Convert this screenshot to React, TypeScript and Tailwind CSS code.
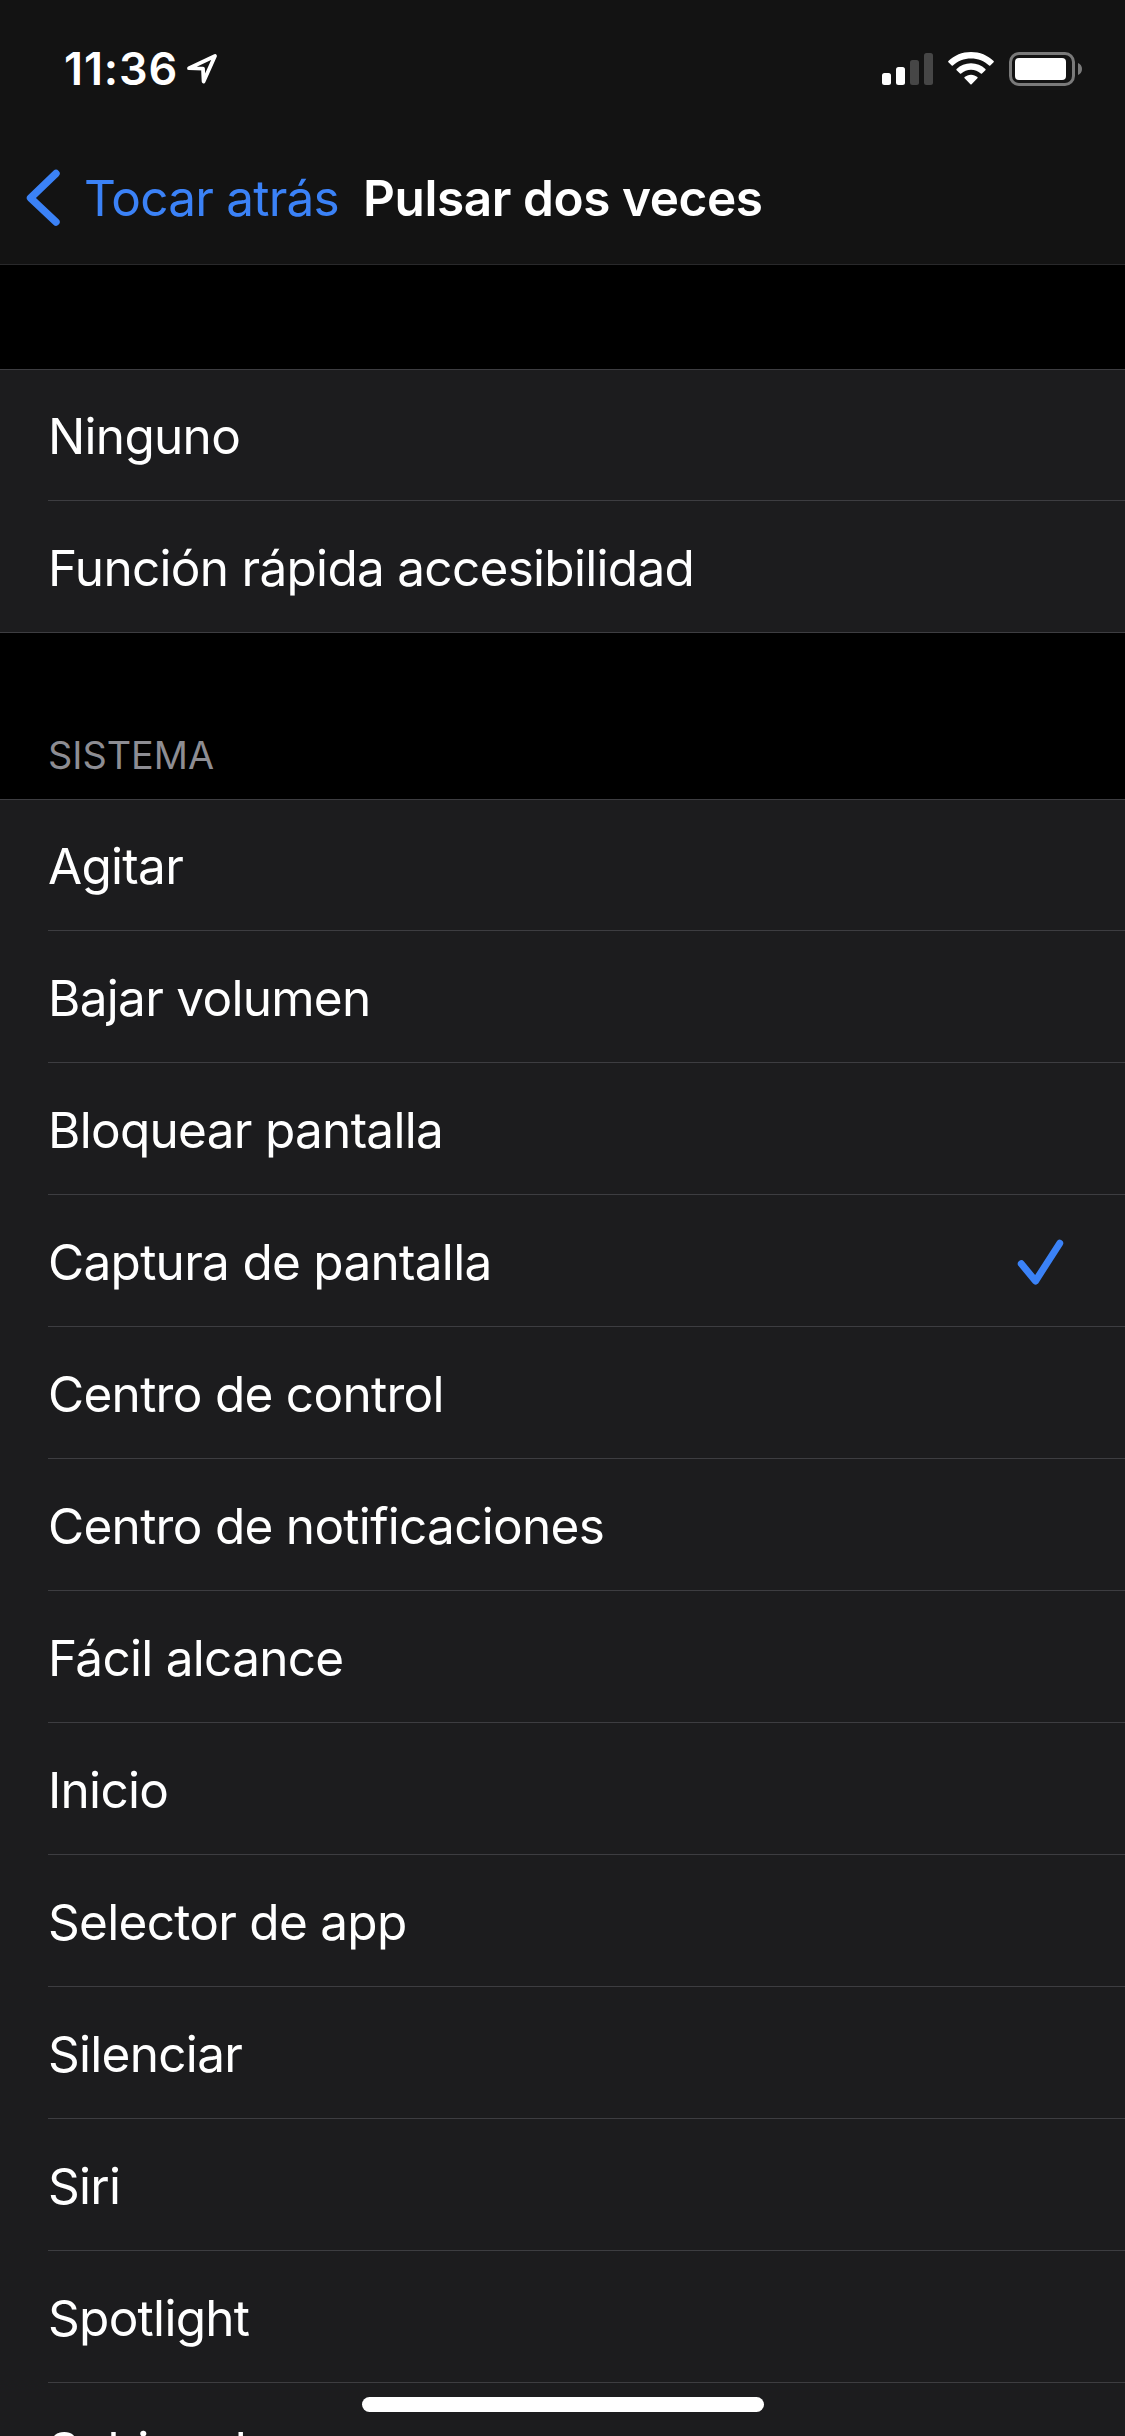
const topActions = ["Ninguno", "Función rápida accesibilidad"];

const systemActions = [
  "Agitar",
  "Bajar volumen",
  "Bloquear pantalla",
  "Captura de pantalla",
  "Centro de control",
  "Centro de notificaciones",
  "Fácil alcance",
  "Inicio",
  "Selector de app",
  "Silenciar",
  "Siri",
  "Spotlight",
  "Subir volumen",
];

function StatusBar() {
  return (
    <div className="flex h-[132px] items-start justify-between pl-[64px] pr-[43px] pt-[42px]">
      <div className="flex items-start">
        <span className="text-[45px] font-semibold leading-[54px] tracking-[0.85px]">11:36</span>
        <svg className="ml-[8px] mt-[11px]" width="32" height="32" viewBox="0 0 32 32" fill="none">
          <path
            d="M3 15.2 L29 3 L17.6 28.5 L17 15.6 Z"
            stroke="white"
            strokeWidth="3.8"
            strokeLinejoin="round"
          />
        </svg>
      </div>

      <div className="flex items-start pt-[10px]">
        <div className="mt-px flex h-8 items-end gap-[5px]">
          <div className="h-3 w-[9px] rounded-[2.5px] bg-white" />
          <div className="h-[18px] w-[9px] rounded-[2.5px] bg-white" />
          <div className="h-[25px] w-[9px] rounded-[2.5px] bg-[#464646]" />
          <div className="h-8 w-[9px] rounded-[2.5px] bg-[#464646]" />
        </div>
        <svg className="ml-[15px]" width="46" height="33" viewBox="0 0 46 33" fill="white">
          <path d="M23 0C31.800 0 39.800 3.300 45.600 9.100Q46.100 9.700 45.600 10.300L42.300 13.600Q41.700 14.100 41.100 13.600C36.300 9 30 6.600 23 6.600S9.700 9 4.900 13.600Q4.300 14.100 3.700 13.600L.4 10.300Q-.1 9.700 .4 9.100C6.200 3.300 14.200 0 23 0Z" />
          <path d="M23 11.200C28.600 11.200 33.600 13.300 37.400 17Q38 17.600 37.400 18.200L34 21.600Q33.400 22.100 32.800 21.600C30.200 19.200 26.700 17.700 23 17.700S15.800 19.200 13.200 21.600Q12.600 22.100 12 21.600L8.600 18.200Q8 17.600 8.600 17C12.400 13.300 17.400 11.200 23 11.200Z" />
          <path d="M23 22.700C25.500 22.700 27.700 23.600 29.400 25.100Q30 25.700 29.400 26.300L23.600 32.200Q23 32.800 22.400 32.200L16.600 26.300Q16 25.700 16.600 25.100C18.300 23.600 20.500 22.700 23 22.700Z" />
        </svg>
        <div className="ml-[15px] flex items-center">
          <div className="h-[34px] w-[66px] rounded-[10px] border-[3px] border-[#7a7a7a] p-[3px]">
            <div className="h-[22px] w-[51px] rounded-[4px] bg-white" />
          </div>
          <svg className="ml-[3px]" width="4" height="12" viewBox="0 0 4 12">
            <path d="M0 0C2.500 1 4 3.300 4 6S2.500 11 0 12Z" fill="#7a7a7a" />
          </svg>
        </div>
      </div>
    </div>
  );
}

function NavBar() {
  return (
    <div className="flex h-[132px] items-center pl-[25px]">
      <button className="flex items-center text-[#3b82f7]">
        <svg width="36" height="58" viewBox="0 0 36 58" fill="none">
          <path
            d="M31 4.500L5.500 29L31 53"
            stroke="currentColor"
            strokeWidth="7.400"
            strokeLinecap="round"
            strokeLinejoin="round"
          />
        </svg>
        <span className="ml-[23px] w-[279px] whitespace-nowrap text-left text-[49.500px] leading-[60px] tracking-[-0.78px]">
          Tocar atrás
        </span>
      </button>
      <h1 className="whitespace-nowrap text-[49.500px] font-semibold leading-[60px] tracking-[-0.42px]">
        Pulsar dos veces
      </h1>
    </div>
  );
}

function ActionList({ items, selected }: { items: string[]; selected?: string }) {
  return (
    <div className="border-t border-[#3d3d41] bg-[#1c1c1e]">
      <ul className="-mt-px">
        {items.map((item) => (
          <li key={item} className="group h-[132px] pl-12 last:border-b last:border-[#3d3d41]">
            <div className="flex h-[132px] items-center justify-between border-b border-[#3d3d41] pr-[60px] pt-[2px] group-last:border-b-0">
              <span className="whitespace-nowrap text-[49.500px] leading-[60px] tracking-[-0.71px]">{item}</span>
              {item === selected && (
                <svg width="48" height="48" viewBox="0 0 48 48" fill="none">
                  <path
                    d="M4.300 25.800L18.500 43L42.700 5.300"
                    stroke="#3b82f7"
                    strokeWidth="7"
                    strokeLinecap="round"
                    strokeLinejoin="round"
                  />
                </svg>
              )}
            </div>
          </li>
        ))}
      </ul>
    </div>
  );
}

export default function App() {
  return (
    <div className="relative h-[2436px] w-[1125px] overflow-hidden bg-black font-['Inter','Liberation_Sans',sans-serif] text-white">
      <header className="h-[265px] border-b border-[#29292b] bg-[#131313]">
        <StatusBar />
        <NavBar />
      </header>

      <main className="pt-[104px]">
        <ActionList items={topActions} />
        <h2 className="flex h-[166px] items-end pb-[21px] pl-12 text-[37.800px] leading-[46px] text-[#8d8d93]">
          SISTEMA
        </h2>
        <ActionList items={systemActions} selected="Captura de pantalla" />
      </main>

      {/* home indicator */}
      <div className="absolute bottom-6 left-[362px] h-[15px] w-[402px] rounded-full bg-white" />
    </div>
  );
}
